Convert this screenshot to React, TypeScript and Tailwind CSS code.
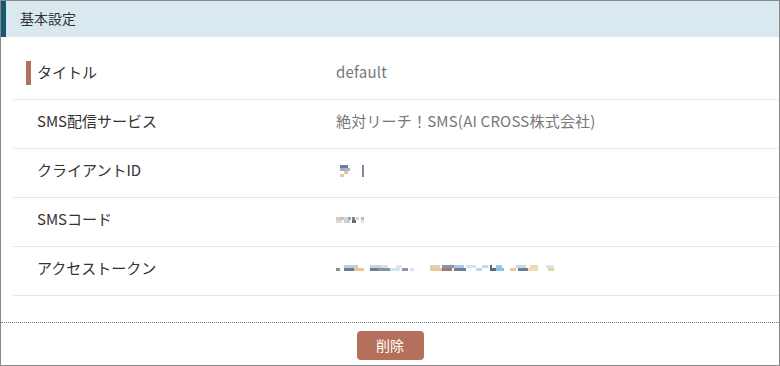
const font = { fontFamily: '"Noto Sans CJK JP", "Noto Sans", sans-serif' }

type Block = [number, number, number, string]

function Pixels({ blocks, w, h }: { blocks: Block[]; w: number; h: number }) {
  return (
    <svg width={w} height={h} viewBox={`0 0 ${w} ${h}`}>
      {blocks.map(([x, y, bw, c], i) => (
        <rect key={i} x={x} y={y} width={bw} height={3} fill={c} />
      ))}
    </svg>
  )
}

const clientId: Block[] = [
  [4, 2, 8, '#6f7f97'], [4, 5, 4, '#8fb4d8'], [8, 5, 6, '#a8b4c4'], [8, 8, 4, '#e4c39a'], [4, 11, 4, '#e8c79e'],
  [26, 2, 2, '#7a8aa0'], [26, 5, 2, '#7a8aa0'], [26, 8, 2, '#7a8aa0'], [26, 11, 2, '#7a8aa0'],
]
const smsCode: Block[] = [
  [0, 2, 4, '#e8c79e'], [4, 2, 4, '#b8c4d4'], [8, 2, 4, '#d0d8e4'], [12, 2, 3, '#9aa6b8'], [16, 2, 3, '#8a7f86'],
  [20, 2, 3, '#f0d6b0'], [25, 2, 3, '#b4bcc8'], [0, 5, 6, '#d4dae2'], [8, 5, 6, '#c8d0dc'], [16, 5, 4, '#6f6470'], [25, 5, 3, '#dfe4ea'],
]
const token: Block[] = [
  [0, 4, 4, '#8a8f96'], [8, 1, 14, '#b8cfe6'], [8, 4, 10, '#6f7c8e'], [18, 4, 10, '#f0c488'],
  [34, 1, 12, '#c2d4e6'], [34, 4, 8, '#6f7c8e'], [44, 1, 8, '#d8dee6'], [42, 4, 12, '#7f94a8'], [54, 4, 10, '#cde6f4'], [60, 1, 6, '#dfe8f0'],
  [66, 4, 6, '#8a96a8'], [74, 4, 4, '#d8e4ee'],
  [94, 1, 10, '#e0d0b8'], [94, 4, 12, '#f0c898'], [106, 1, 12, '#8a96a8'], [106, 4, 10, '#a07a80'], [118, 1, 10, '#aac8e4'],
  [118, 4, 12, '#6f7c90'], [130, 1, 10, '#d4e4f0'], [140, 4, 6, '#bcd8ec'], [146, 1, 6, '#c8d8e4'],
  [154, 1, 2, '#5f6878'], [154, 4, 6, '#5f6878'], [160, 1, 6, '#9cc8ec'], [160, 4, 8, '#90c0e8'],
  [174, 4, 6, '#e8c898'], [180, 1, 10, '#c8d8ec'], [182, 4, 10, '#6f7c8e'], [194, 1, 8, '#e8d8b8'], [192, 4, 10, '#f0dcb0'],
  [210, 1, 8, '#dfe4ea'], [212, 4, 6, '#e8d0a8'],
]

const rows: { label: string; value: React.ReactNode; mark?: boolean }[] = [
  { label: 'タイトル', value: 'default', mark: true },
  { label: 'SMS配信サービス', value: '絶対リーチ！SMS(AI CROSS株式会社)' },
  { label: 'クライアントID', value: <Pixels blocks={clientId} w={34} h={16} /> },
  { label: 'SMSコード', value: <Pixels blocks={smsCode} w={30} h={9} /> },
  { label: 'アクセストークン', value: <Pixels blocks={token} w={222} h={9} /> },
]

export default function App() {
  return (
    <div className="w-[780px] h-[366px] bg-white border border-[#8a8a8a] flex flex-col overflow-hidden" style={font}>
      <div className="h-[36px] shrink-0 bg-[#dae9f0] border-l-[5px] border-[#16586e] pl-[14px] pb-[2px] flex items-center text-[14px] text-[#333]">
        基本設定
      </div>
      <div className="pl-[12px] pt-[14px]">
        {rows.map((r) => (
          <div key={r.label} className="h-[49px] pb-[5px] border-b border-[#e6e6e6] flex items-center">
            <div className="w-[323px] flex items-center pl-[13px]">
              <span className={`w-[5px] h-[24px] mr-[6px] ${r.mark ? 'bg-[#b0705f]' : ''}`} />
              <span className="text-[15px] text-[#333]">{r.label}</span>
            </div>
            <div className="text-[15px] tracking-[0.2px] text-[#777]">{r.value}</div>
          </div>
        ))}
      </div>
      <div className="mt-[26px] border-t border-dotted border-[#7a7a7a]" />
      <div className="flex justify-center pt-[8px]">
        <button className="w-[67px] h-[29px] rounded-[4px] bg-[#b4705a] text-white text-[14px] flex items-center justify-center">
          削除
        </button>
      </div>
    </div>
  )
}
